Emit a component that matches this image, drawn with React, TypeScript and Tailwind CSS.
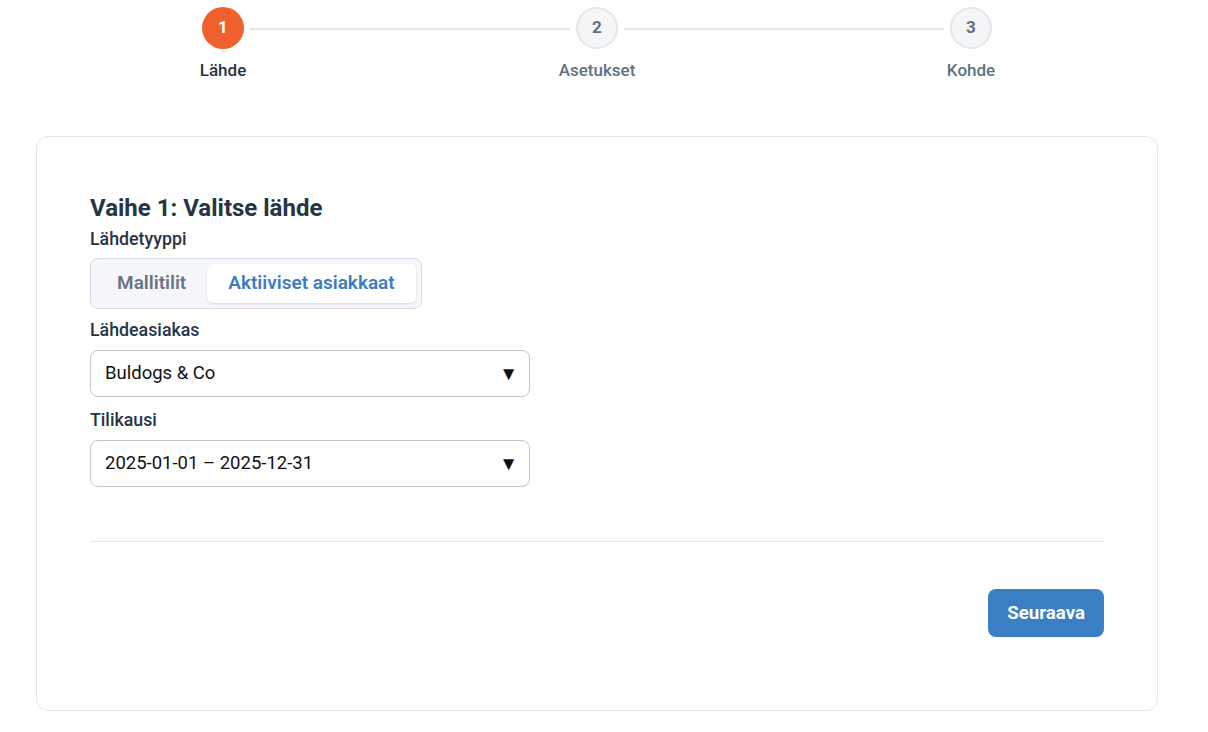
import { useState } from "react";

const steps = [
  { n: 1, label: "Lähde" },
  { n: 2, label: "Asetukset" },
  { n: 3, label: "Kohde" },
];

function Stepper({ current }: { current: number }) {
  return (
    <div className="ml-[202px] flex w-[790px] items-start pt-[7px]">
      {steps.map((s, i) => {
        const active = s.n === current;
        return (
          <div key={s.n} className="contents">
            <div className="flex w-[42px] flex-col items-center">
              <div
                className={
                  active
                    ? "flex h-[42px] w-[42px] items-center justify-center rounded-full bg-[#ef602c] text-[17px] font-bold text-white"
                    : "flex h-[42px] w-[42px] items-center justify-center rounded-full border-2 border-[#e3e6ea] bg-[#f4f5f7] text-[17px] font-bold text-[#5d7282]"
                }
              >
                {s.n}
              </div>
              <span
                className={
                  active
                    ? "mt-[9px] whitespace-nowrap text-[17px] font-medium leading-6 text-[#263445]"
                    : "mt-[9px] whitespace-nowrap text-[17px] font-medium leading-6 text-[#5d7282]"
                }
              >
                {s.label}
              </span>
            </div>
            {i < steps.length - 1 && (
              <div className="mx-[6px] mt-[21px] h-[2px] flex-1 bg-[#e3e5e8]" />
            )}
          </div>
        );
      })}
    </div>
  );
}

function FakeSelect({ value }: { value: string }) {
  return (
    <div className="flex h-[47px] w-[440px] items-center justify-between rounded-lg border border-[#c3c6ca] bg-white pl-[14px] pr-[11px] text-[18.5px] text-[#111]">
      <span>{value}</span>
      <span className="text-[19px] leading-none">▼</span>
    </div>
  );
}

export default function App() {
  const [source, setSource] = useState<"templates" | "clients">("clients");

  const tab = (on: boolean) =>
    on
      ? "h-[39px] rounded-md bg-white px-[21px] text-[19px] font-semibold text-[#3a7dc2] shadow-sm"
      : "h-[39px] rounded-md px-[21px] text-[19px] font-semibold text-[#687384]";

  return (
    <div
      className="min-h-screen bg-white"
      style={{ fontFamily: "Roboto, 'Noto Sans', sans-serif" }}
    >
      <Stepper current={1} />

      <div className="ml-[36px] mt-[54px] w-[1122px] rounded-xl border border-[#e4e6e9] px-[53px] pb-[73px] pt-[56px]">
        <h2 className="text-[24px] font-bold leading-[30px] text-[#263445]">Vaihe 1: Valitse lähde</h2>

        <label className="mt-[4px] block text-[17.8px] font-medium leading-6 text-[#263445]">Lähdetyyppi</label>
        <div className="mt-[7px] inline-flex rounded-lg border border-[#d3dbe6] bg-[#f5f7fa] p-[5px]">
          <button onClick={() => setSource("templates")} className={tab(source === "templates")}>
            Mallitilit
          </button>
          <button onClick={() => setSource("clients")} className={tab(source === "clients")}>
            Aktiiviset asiakkaat
          </button>
        </div>

        <label className="mt-[9px] block text-[17.8px] font-medium leading-6 text-[#263445]">Lähdeasiakas</label>
        <div className="mt-[8px]">
          <FakeSelect value="Buldogs & Co" />
        </div>

        <label className="mt-[11px] block text-[17.8px] font-medium leading-6 text-[#263445]">Tilikausi</label>
        <div className="mt-[8px]">
          <FakeSelect value="2025-01-01 – 2025-12-31" />
        </div>

        <div className="mt-[54px] h-px bg-[#e4e6e9]" />

        <div className="mt-[47px] flex justify-end">
          <button className="h-[48px] rounded-lg bg-[#3a7fc3] px-[19px] text-[18.7px] font-bold text-white">
            Seuraava
          </button>
        </div>
      </div>
    </div>
  );
}
